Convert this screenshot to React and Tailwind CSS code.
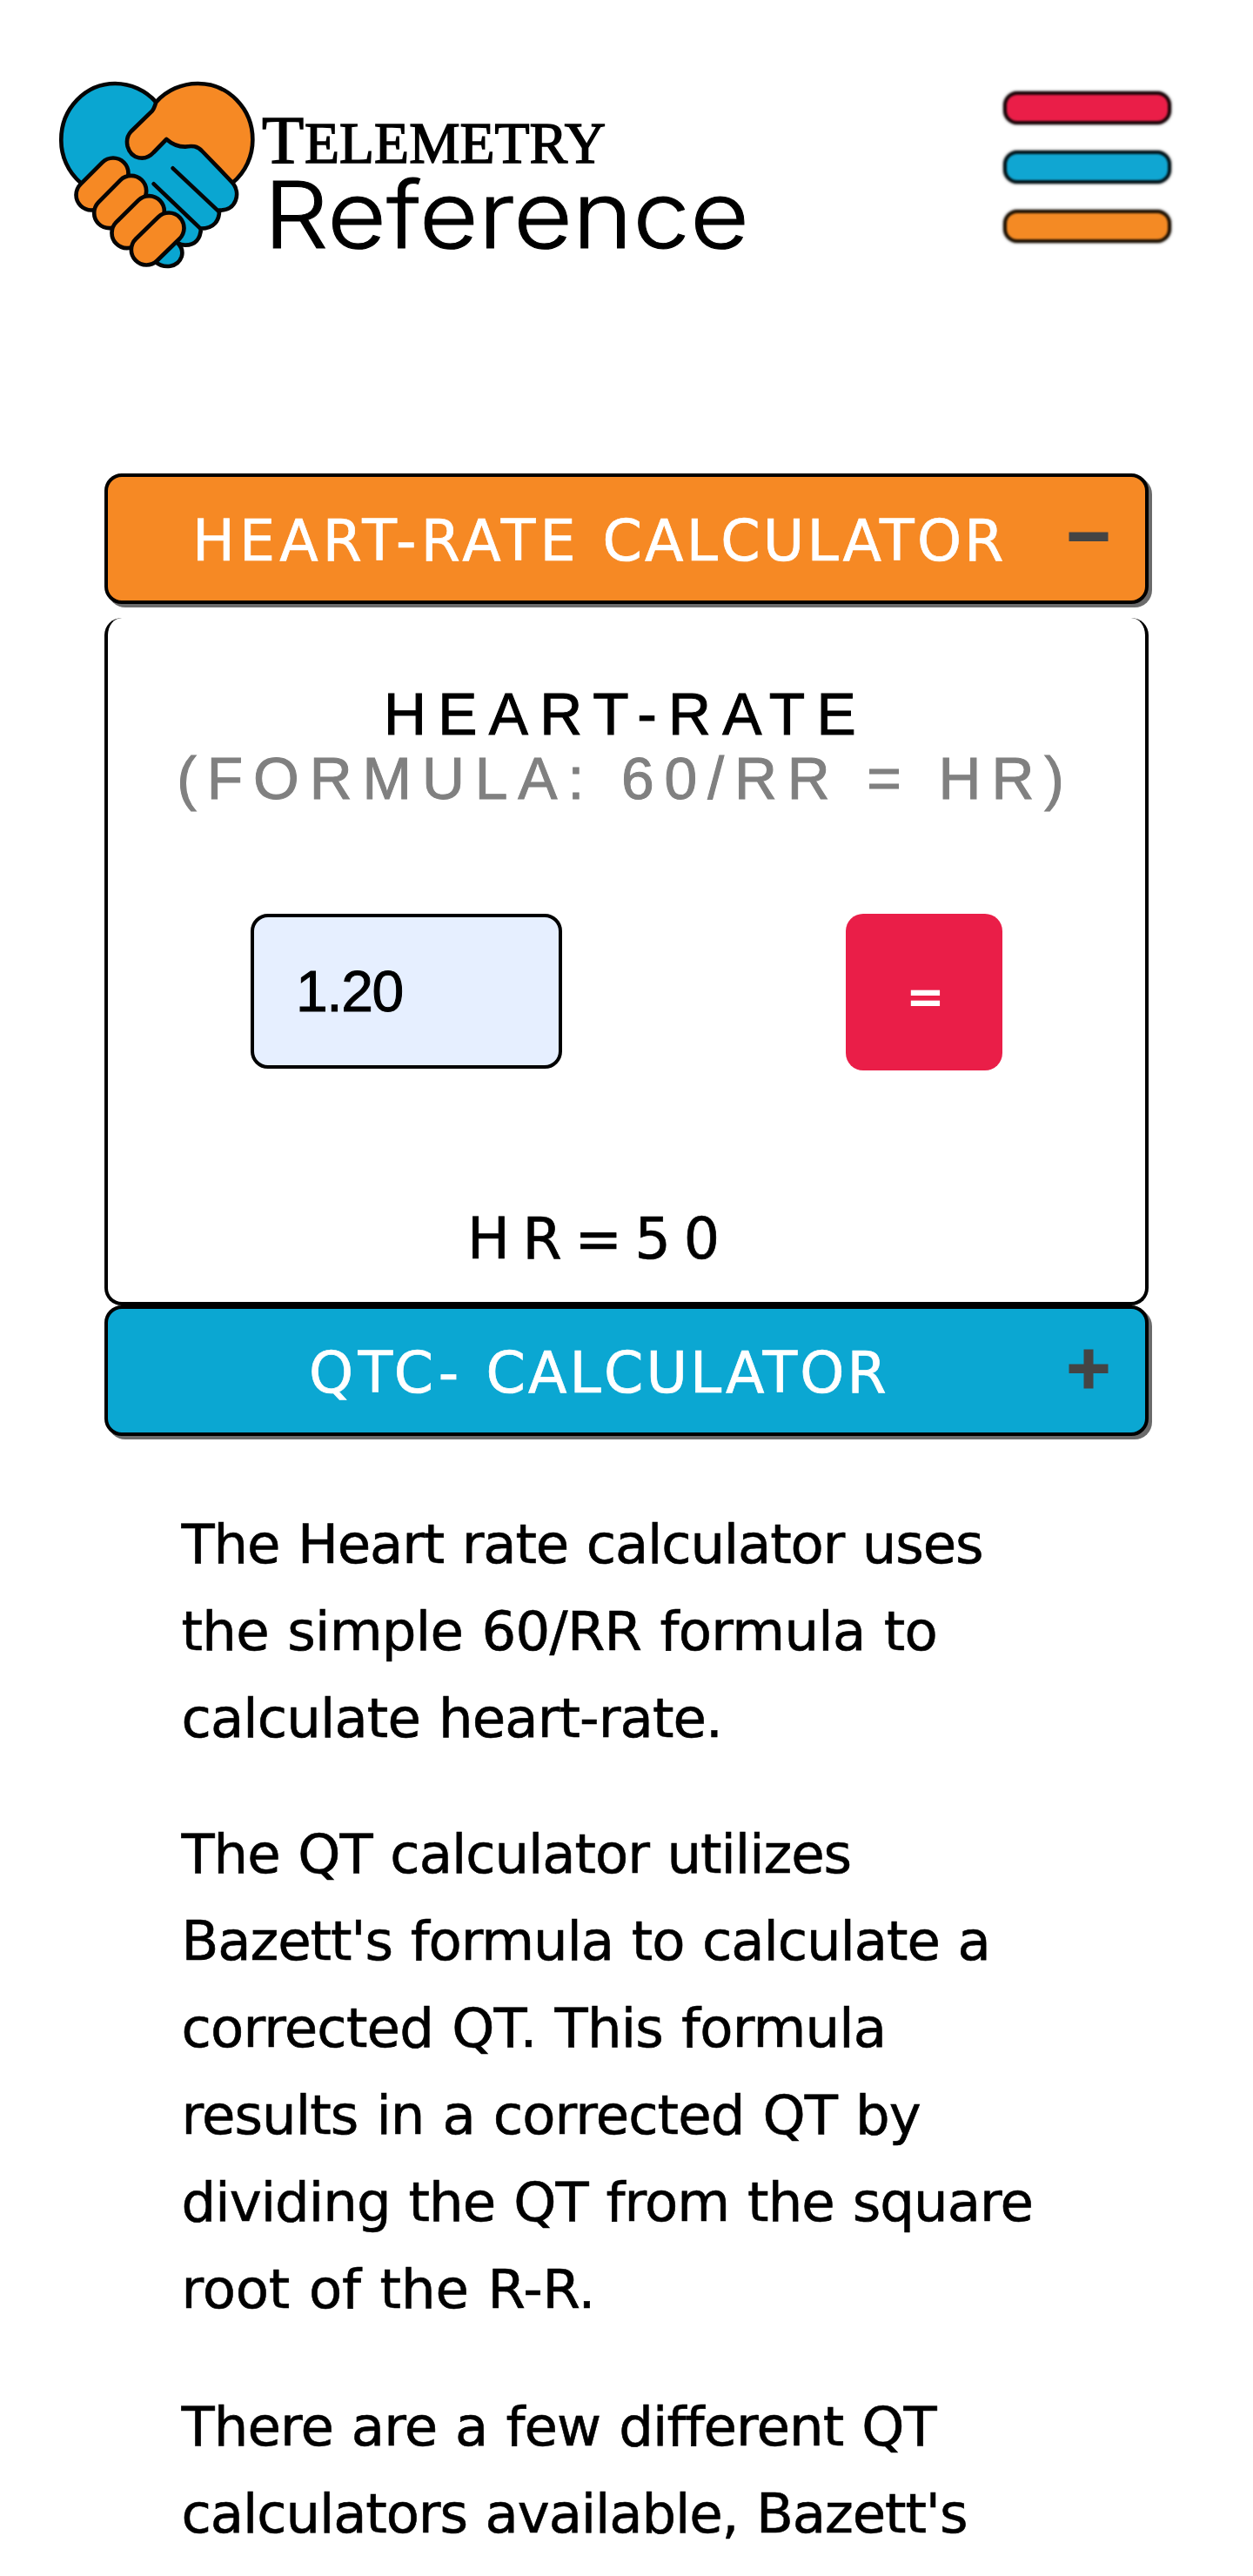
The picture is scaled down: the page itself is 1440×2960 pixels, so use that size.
import React from "react";

const fingers = [
  [240, 357, 165, 432],
  [302, 418, 227, 494],
  [364, 488, 288, 563],
  [432, 546, 355, 621],
];

function Logo() {
  return (
    <svg className="h-60 w-[830px] shrink-0" viewBox="0 0 830 240" role="img" aria-label="Telemetry Reference">
      <g transform="scale(0.33333)" stroke="#050505" strokeWidth="14" strokeLinecap="round" strokeLinejoin="round">
        <path
          fill="#0aa6d1"
          d="M128 390A192 192 0 0 1 61 241A186 193 0 0 1 247 48A190 190 0 0 1 388 112L540 265L652 390C680 425 667 485 606 485C607 520 588 548 543 548C541 583 524 606 487 605C478 604 470 601 462 597C480 615 480 632 476 645C463 682 416 688 385 662Z"
        />
        <path d="M446 340L603 488M380 394L541 548" fill="none" />
        <path
          fill="#f68924"
          d="M388 112A192 192 0 0 1 533 48A188 193 0 0 1 721 241A192 192 0 0 1 652 390L548 282C530 262 512 262 488 266C464 266 442 256 424 240L380 285C350 318 302 308 290 265C284 240 290 226 302 213L375 142Q381 135 388 112Z"
        />
        {fingers.map(([x1, y1, x2, y2]) => (
          <g key={x1}>
            <line x1={x1} y1={y1} x2={x2} y2={y2} strokeWidth="119" />
            <line x1={x1} y1={y1} x2={x2} y2={y2} strokeWidth="91" stroke="#f68924" />
          </g>
        ))}
      </g>
      <g fontFamily='"Liberation Serif", serif' stroke="#000" strokeWidth="1.5">
        <text x="251" y="107" fontSize="79">T</text>
        <text x="300" y="107" fontSize="67" textLength="346" lengthAdjust="spacingAndGlyphs">ELEMETRY</text>
      </g>
      <text x="253" y="204.5" fontSize="106" fontWeight="300" fontFamily="Inter, sans-serif" textLength="558" lengthAdjust="spacingAndGlyphs" stroke="#000" strokeWidth="1">
        Reference
      </text>
    </svg>
  );
}

const bar = "h-[38px] w-full rounded-[16px] border-4 blur-[1px] shadow-[0_0_3px_rgba(0,0,0,0.7)]";

function MenuButton() {
  return (
    <button className="mt-[25px] mr-[94px] flex w-[193px] flex-col gap-[30px]" aria-label="Menu">
      <span className={bar + " border-[#1c060a] bg-[#ea1e48]"} />
      <span className={bar + " border-[#03151b] bg-[#10a6d2]"} />
      <span className={bar + " border-[#201304] bg-[#f48a24]"} />
    </button>
  );
}

const headerBase =
  "flex h-[150px] w-full items-center justify-between rounded-[20px] border-4 border-black pt-[5px] pr-[42px] text-left text-[65px] leading-[76px] text-white shadow-[4px_4px_0_#6b6b6b] [-webkit-text-stroke:0.7px_white]";

const paragraphs = [
  {
    gap: "mb-[56px]",
    lines: [
      ["The Heart rate calculator uses", "tracking-[-1.17px]"],
      ["the simple 60/RR formula to", "tracking-[-0.7px]"],
      ["calculate heart-rate.", "tracking-[-0.9px]"],
    ],
  },
  {
    gap: "mb-[58px]",
    lines: [
      ["The QT calculator utilizes", "tracking-[-1.07px]"],
      ["Bazett's formula to calculate a", "tracking-[-1.1px]"],
      ["corrected QT. This formula", "tracking-[-0.82px]"],
      ["results in a corrected QT by", "tracking-[-0.92px]"],
      ["dividing the QT from the square", "tracking-[-0.95px]"],
      ["root of the R-R.", "tracking-[-0.15px]"],
    ],
  },
  {
    gap: "mb-0",
    lines: [
      ["There are a few different QT", "tracking-[-0.92px]"],
      ["calculators available, Bazett's", "tracking-[-1.12px]"],
    ],
  },
];

export default function App() {
  return (
    <div className="h-[2960px] w-[1440px] overflow-hidden bg-white text-black font-['DejaVu_Sans',Verdana,sans-serif]">
      <header className="flex h-[544px] items-start justify-between pt-20 pl-[50px]">
        <Logo />
        <MenuButton />
      </header>
      <main>
        <section className="mx-[120px]">
          <button className={headerBase + " bg-[#f68924] pl-[97px]"}>
            <span className="tracking-[3.2px] whitespace-nowrap">
              <span className="tracking-[5.1px]">HEART-RATE </span>CALCULATOR
            </span>
            <svg className="mb-[10px] h-[46px] w-[46px] shrink-0" viewBox="0 0 46 46" fill="#444">
              <rect x="0.5" y="17.5" width="45" height="10.5" />
            </svg>
          </button>
          <div className="mt-4 flex h-[790px] flex-col rounded-[20px] border-4 border-t-0 border-black pt-[74px]">
            <div className="pr-[2px] text-center text-[67.8px] leading-[74px] font-['Liberation_Sans',Arial,sans-serif]">
              <h2 className="tracking-[13.3px] [-webkit-text-stroke:1px_black]">HEART-RATE</h2>
              <div className="tracking-[11.9px] whitespace-nowrap text-[#808080] [-webkit-text-stroke:1px_#808080]">(FORMULA: 60/RR = HR)</div>
            </div>
            <div className="mt-[118px] flex justify-between px-[164px]">
              <input
                className="h-[178px] w-[358px] rounded-[20px] border-4 border-black bg-[#e6efff] pl-[48px] text-[66px] tracking-[-1.4px] font-['Liberation_Sans',Arial,sans-serif] [-webkit-text-stroke:1px_black]"
                defaultValue="1.20"
              />
              <button className="h-[180px] w-[180px] rounded-[20px] bg-[#ea1e48] pt-[11px] pl-[3px] text-[53px] font-bold text-white">=</button>
            </div>
            <div className="mt-[155px] pt-px pl-[413px] text-[65px] leading-[76px] tracking-[14.7px] [-webkit-text-stroke:0.7px_black]">HR=50</div>
          </div>
          <button className={headerBase + " bg-[#0ba7d2] pl-[231px]"}>
            <span className="tracking-[3.1px] whitespace-nowrap">
              <span className="tracking-[5.4px]">QTC- </span>CALCULATOR
            </span>
            <svg className="mb-[10px] h-[46px] w-[46px] shrink-0" viewBox="0 0 46 46" fill="#444">
              <rect x="0.5" y="17.5" width="45" height="10.5" />
              <rect x="17.5" y="0.5" width="11" height="45" />
            </svg>
          </button>
        </section>
        <article className="mt-[75px] ml-[208.5px] text-[62.5px] leading-[100px] [-webkit-text-stroke:0.6px_black] [word-spacing:2px]">
          {paragraphs.map(({ gap, lines }, i) => (
            <p key={i} className={gap + " whitespace-nowrap"}>
              {lines.map(([text, tracking]) => (
                <React.Fragment key={text}>
                  <span className={tracking}>{text}</span>
                  <br />
                </React.Fragment>
              ))}
            </p>
          ))}
        </article>
      </main>
    </div>
  );
}
